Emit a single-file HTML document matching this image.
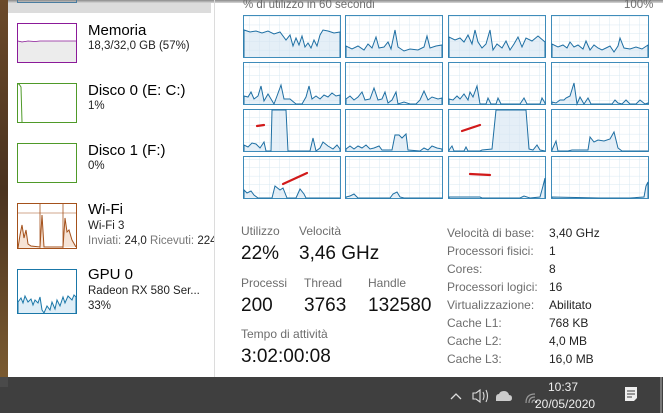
<!DOCTYPE html>
<html><head><meta charset="utf-8"><style>
*{margin:0;padding:0;box-sizing:border-box}
body{width:663px;height:413px;overflow:hidden;background:#fff;font-family:"Liberation Sans",sans-serif;position:relative;color:#000}
.a{position:absolute;white-space:nowrap}
.lbl{font-size:12px;color:#6d6d6d}
.big{font-size:19px;color:#111}
.sm{font-size:11.5px;color:#222}
</style></head><body>
<div class="a" style="left:0;top:0;width:8px;height:377px;background:linear-gradient(#6b4a2a,#4a3320 50%,#7a5a30)"></div>
<div class="a" style="left:8px;top:0;width:655px;height:3px;background:linear-gradient(#8a8a8a,#d8d8d8)"></div>
<div class="a" style="left:8px;top:3px;width:203px;height:10px;background:#dcdcdc"></div>
<div class="a" style="left:17px;top:0;width:60px;height:3px;border:1px solid #4a7da0;border-top:none"></div>
<div class="a" style="left:214px;top:0;width:1px;height:377px;background:#dcdcdc"></div>

<svg class="a" style="left:0;top:0" width="663" height="377">
<rect x="17.5" y="23.5" width="59" height="39" fill="#fff" stroke="#8b1a99"/>
<rect x="18" y="41" width="58" height="21" fill="#ececec"/>
<polyline points="18,41 22,42 28,41 35,41.5 40,41 76,41" fill="none" stroke="#8b1a99" stroke-width="0.8"/>
<rect x="17.5" y="83.5" width="59" height="39" fill="#fff" stroke="#4f9a29"/>
<polyline points="18,84 19,84 21,87 22,122" fill="none" stroke="#4f9a29"/>
<rect x="17.5" y="143.5" width="59" height="39" fill="#fff" stroke="#4f9a29"/>
<rect x="17.5" y="203.5" width="59" height="45" fill="#fff" stroke="#a4511b"/>
<line x1="18" y1="213" x2="76" y2="213" stroke="#a4511b" stroke-width="0.6"/>
<line x1="40" y1="204" x2="40" y2="248" stroke="#a4511b" stroke-width="0.8"/>
<line x1="63" y1="204" x2="63" y2="248" stroke="#a4511b" stroke-width="0.8"/>
<polyline points="18,248 20,235 22,225 24,238 26,230 28,244 31,246 40,247 42,215 44,247 63,247 65,218 67,232 69,230 72,240 76,247" fill="#f6e3d5" stroke="#a4511b"/>
<rect x="17.5" y="269.5" width="59" height="44" fill="#fff" stroke="#1a77a8"/>
<polyline points="18,313 18,302 21,298 23,303 25,296 28,302 31,299 33,305 35,300 38,303 40,297 42,310 44,313 47,306 50,310 52,302 55,309 57,300 60,306 63,297 65,303 68,296 72,300 74,295 76,297 76,313" fill="#dfeef7" stroke="#1a77a8"/>
<defs>
<pattern id="g" width="10" height="8.4" patternUnits="userSpaceOnUse"><path d="M10 0V8.4M0 8.4H10" fill="none" stroke="#d9e8f2" stroke-width="1"/></pattern>
</defs>
<g stroke="#3f8cba" stroke-width="1">
<rect x="243.5" y="15.5" width="97" height="42" fill="url(#g)"/>
<rect x="345.5" y="15.5" width="97" height="42" fill="url(#g)"/>
<rect x="448.5" y="15.5" width="97" height="42" fill="url(#g)"/>
<rect x="551.5" y="15.5" width="97" height="42" fill="url(#g)"/>
<rect x="243.5" y="62.5" width="97" height="42" fill="url(#g)"/>
<rect x="345.5" y="62.5" width="97" height="42" fill="url(#g)"/>
<rect x="448.5" y="62.5" width="97" height="42" fill="url(#g)"/>
<rect x="551.5" y="62.5" width="97" height="42" fill="url(#g)"/>
<rect x="243.5" y="109.5" width="97" height="42" fill="url(#g)"/>
<rect x="345.5" y="109.5" width="97" height="42" fill="url(#g)"/>
<rect x="448.5" y="109.5" width="97" height="42" fill="url(#g)"/>
<rect x="551.5" y="109.5" width="97" height="42" fill="url(#g)"/>
<rect x="243.5" y="156.5" width="97" height="42" fill="url(#g)"/>
<rect x="345.5" y="156.5" width="97" height="42" fill="url(#g)"/>
<rect x="448.5" y="156.5" width="97" height="42" fill="url(#g)"/>
<rect x="551.5" y="156.5" width="97" height="42" fill="url(#g)"/>
</g>
<g fill="#d3e5f2" fill-opacity="0.6" stroke="#1e6fa3" stroke-width="1">
<polyline points="244,57 244,30 250,32 256,31 262,33 268,31 274,34 280,32 286,40 290,35 293,46 296,38 299,45 302,36 305,47 308,43 311,48 314,40 317,46 320,35 323,30 328,31 334,33 340,32 340,57"/>
<polyline points="346,57 346,46 352,49 358,46 364,50 368,44 372,48 376,37 379,48 384,47 388,42 391,49 395,30 398,47 404,51 410,49 418,50 424,47 427,36 430,48 436,46 442,45 442,57"/>
<polyline points="449,57 449,37 455,40 460,38 464,42 468,35 472,44 475,30 478,42 482,48 486,44 490,30 493,50 497,44 502,48 506,41 510,50 514,44 518,37 522,47 526,38 532,41 538,36 545,42 545,57"/>
<polyline points="552,57 552,44 558,47 563,45 567,48 570,42 574,47 578,45 583,49 586,41 590,50 594,45 598,48 602,50 606,48 610,46 614,52 618,46 620,38 624,48 630,49 636,47 642,49 648,45 648,57"/>
<polyline points="244,104 244,96 248,97 251,92 254,99 258,96 261,86 264,101 268,94 271,99 274,104 277,96 281,85 284,99 290,99 296,104 302,104 306,97 309,86 312,99 316,96 320,99 324,95 328,97 332,93 336,96 340,95 340,104"/>
<polyline points="346,104 346,99 350,96 354,100 358,97 362,92 365,100 370,99 374,88 378,100 382,99 385,92 388,103 392,100 396,92 398,104 404,102 410,104 416,104 420,100 424,91 428,100 432,97 438,99 442,98 442,104"/>
<polyline points="449,104 449,99 453,100 457,96 460,99 464,94 468,100 470,92 473,97 477,86 480,104 486,104 488,98 491,104 496,104 498,98 501,104 520,104 524,98 527,104 540,104 542,98 545,103 545,104"/>
<polyline points="552,104 552,102 556,103 560,100 564,100 566,98 570,96 574,83 577,104 580,97 584,104 588,98 591,104 612,104 615,100 618,103 622,104 626,100 630,104 636,104 640,100 645,104 648,103 648,104"/>
<polyline points="244,151 244,145 248,147 252,143 256,144 260,148 264,142 266,151 271,151 272,110 286,110 288,151 310,151 313,138 316,151 320,148 323,142 328,146 333,149 337,145 340,149 340,151"/>
<polyline points="346,151 346,149 350,146 354,149 358,146 362,148 366,145 370,149 374,148 379,146 382,150 386,150 392,150 395,135 399,135 402,138 406,134 408,150 420,151 424,148 428,150 432,146 437,148 442,149 442,151"/>
<polyline points="449,151 449,150 452,146 454,151 464,151 466,147 468,151 480,151 482,150 492,149 496,110 526,110 529,149 533,150 537,145 540,150 545,151"/>
<polyline points="552,151 552,150 556,141 558,151 568,151 572,150 588,150 590,137 594,142 598,140 604,141 610,139 614,132 618,148 622,151 648,151"/>
<polyline points="244,198 244,190 247,193 251,191 254,195 258,198 272,198 275,186 280,190 283,188 287,198 296,198 300,189 304,194 306,198 340,198"/>
<polyline points="346,198 346,197 350,196 354,194 358,198 390,198 393,194 397,192 400,197 404,198 442,198"/>
<polyline points="449,198 449,197 480,197 482,198 520,198 524,196 530,198 540,197 543,186 545,178 545,198"/>
<polyline points="552,198 552,197 600,198 630,198 644,197 646,186 648,182 648,198"/>
</g>
<g fill="none" stroke="#d11a1a" stroke-width="2.2" stroke-linecap="round">
<line x1="257" y1="126" x2="264" y2="125"/>
<line x1="462" y1="131" x2="480" y2="125"/>
<line x1="283" y1="184" x2="307" y2="173"/>
<line x1="470" y1="174" x2="490" y2="175"/>
</g>
</svg>

<div class="a" style="left:88px;top:22px;font-size:15px">Memoria</div>
<div class="a sm" style="left:88px;top:40px">18,3/32,0 GB (57%)</div>
<div class="a" style="left:88px;top:82px;font-size:15px">Disco 0 (E: C:)</div>
<div class="a sm" style="left:88px;top:100px">1%</div>
<div class="a" style="left:88px;top:142px;font-size:15px">Disco 1 (F:)</div>
<div class="a sm" style="left:88px;top:160px">0%</div>
<div class="a" style="left:88px;top:201px;font-size:15px">Wi-Fi</div>
<div class="a sm" style="left:88px;top:220px">Wi-Fi 3</div>
<div class="a sm" style="left:88px;top:235px;width:126px;overflow:hidden"><span style="color:#777">Inviati:</span> 24,0 <span style="color:#777">Ricevuti:</span> 224</div>
<div class="a" style="left:88px;top:266px;font-size:15px">GPU 0</div>
<div class="a sm" style="left:88px;top:285px">Radeon RX 580 Ser...</div>
<div class="a sm" style="left:88px;top:300px">33%</div>

<div class="a lbl" style="left:243px;top:0px;font-size:11.5px;line-height:11px">% di utilizzo in 60 secondi</div>
<div class="a lbl" style="left:624px;top:0px;font-size:11.5px;line-height:11px">100%</div>

<div class="a lbl" style="left:241px;top:224px">Utilizzo</div>
<div class="a lbl" style="left:299px;top:224px">Velocità</div>
<div class="a big" style="left:241px;top:243px">22%</div>
<div class="a big" style="left:299px;top:243px">3,46 GHz</div>
<div class="a lbl" style="left:241px;top:276px">Processi</div>
<div class="a lbl" style="left:304px;top:276px">Thread</div>
<div class="a lbl" style="left:368px;top:276px">Handle</div>
<div class="a big" style="left:241px;top:295px">200</div>
<div class="a big" style="left:304px;top:295px">3763</div>
<div class="a big" style="left:368px;top:295px">132580</div>
<div class="a lbl" style="left:241px;top:327px">Tempo di attività</div>
<div class="a big" style="left:241px;top:346px">3:02:00:08</div>

<div class="a lbl" style="left:447px;top:224px;line-height:18px">Velocità di base:<br>Processori fisici:<br>Cores:<br>Processori logici:<br>Virtualizzazione:<br>Cache L1:<br>Cache L2:<br>Cache L3:</div>
<div class="a" style="left:549px;top:224px;font-size:12px;line-height:18px;color:#222">3,40 GHz<br>1<br>8<br>16<br>Abilitato<br>768 KB<br>4,0 MB<br>16,0 MB</div>

<div class="a" style="left:0;top:377px;width:663px;height:36px;background:#3f3f3f"></div>
<div class="a" style="left:0;top:377px;width:8px;height:10px;background:#4a4a4a"></div>
<svg class="a" style="left:440px;top:377px" width="223" height="36">
<polyline points="11,22 16,17 21,22" fill="none" stroke="#ddd" stroke-width="1.3"/>
<path d="M33 16h3l4-3v12l-4-3h-3z" fill="none" stroke="#ddd" stroke-width="1.1"/>
<path d="M43 15q2 4 0 8M46 13q3 6 0 12" fill="none" stroke="#ddd" stroke-width="1.1"/>
<path d="M56 24h13q3 0 3-3t-3-3q-1-4-5-4t-5 3q-3 0-3 3.5z" fill="#ccc"/>
<path d="M86 26q0-9 9-9M89 26q0-6 6-6M92 26q0-3 3-3" fill="none" stroke="#999" stroke-width="1.2"/>
<circle cx="96" cy="25" r="1.2" fill="#ddd"/>
<path d="M185 10h12v11l-3 3h-9z" fill="#eee"/>
<path d="M187 14h8M187 17h8M187 20h5" stroke="#3f3f3f"/>
<rect x="220" y="0" width="2" height="36" fill="#777"/>
</svg>
<div class="a" style="left:548px;top:380px;font-size:12px;color:#eee">10:37</div>
<div class="a" style="left:535px;top:397px;font-size:12px;color:#eee">20/05/2020</div>
</body></html>
